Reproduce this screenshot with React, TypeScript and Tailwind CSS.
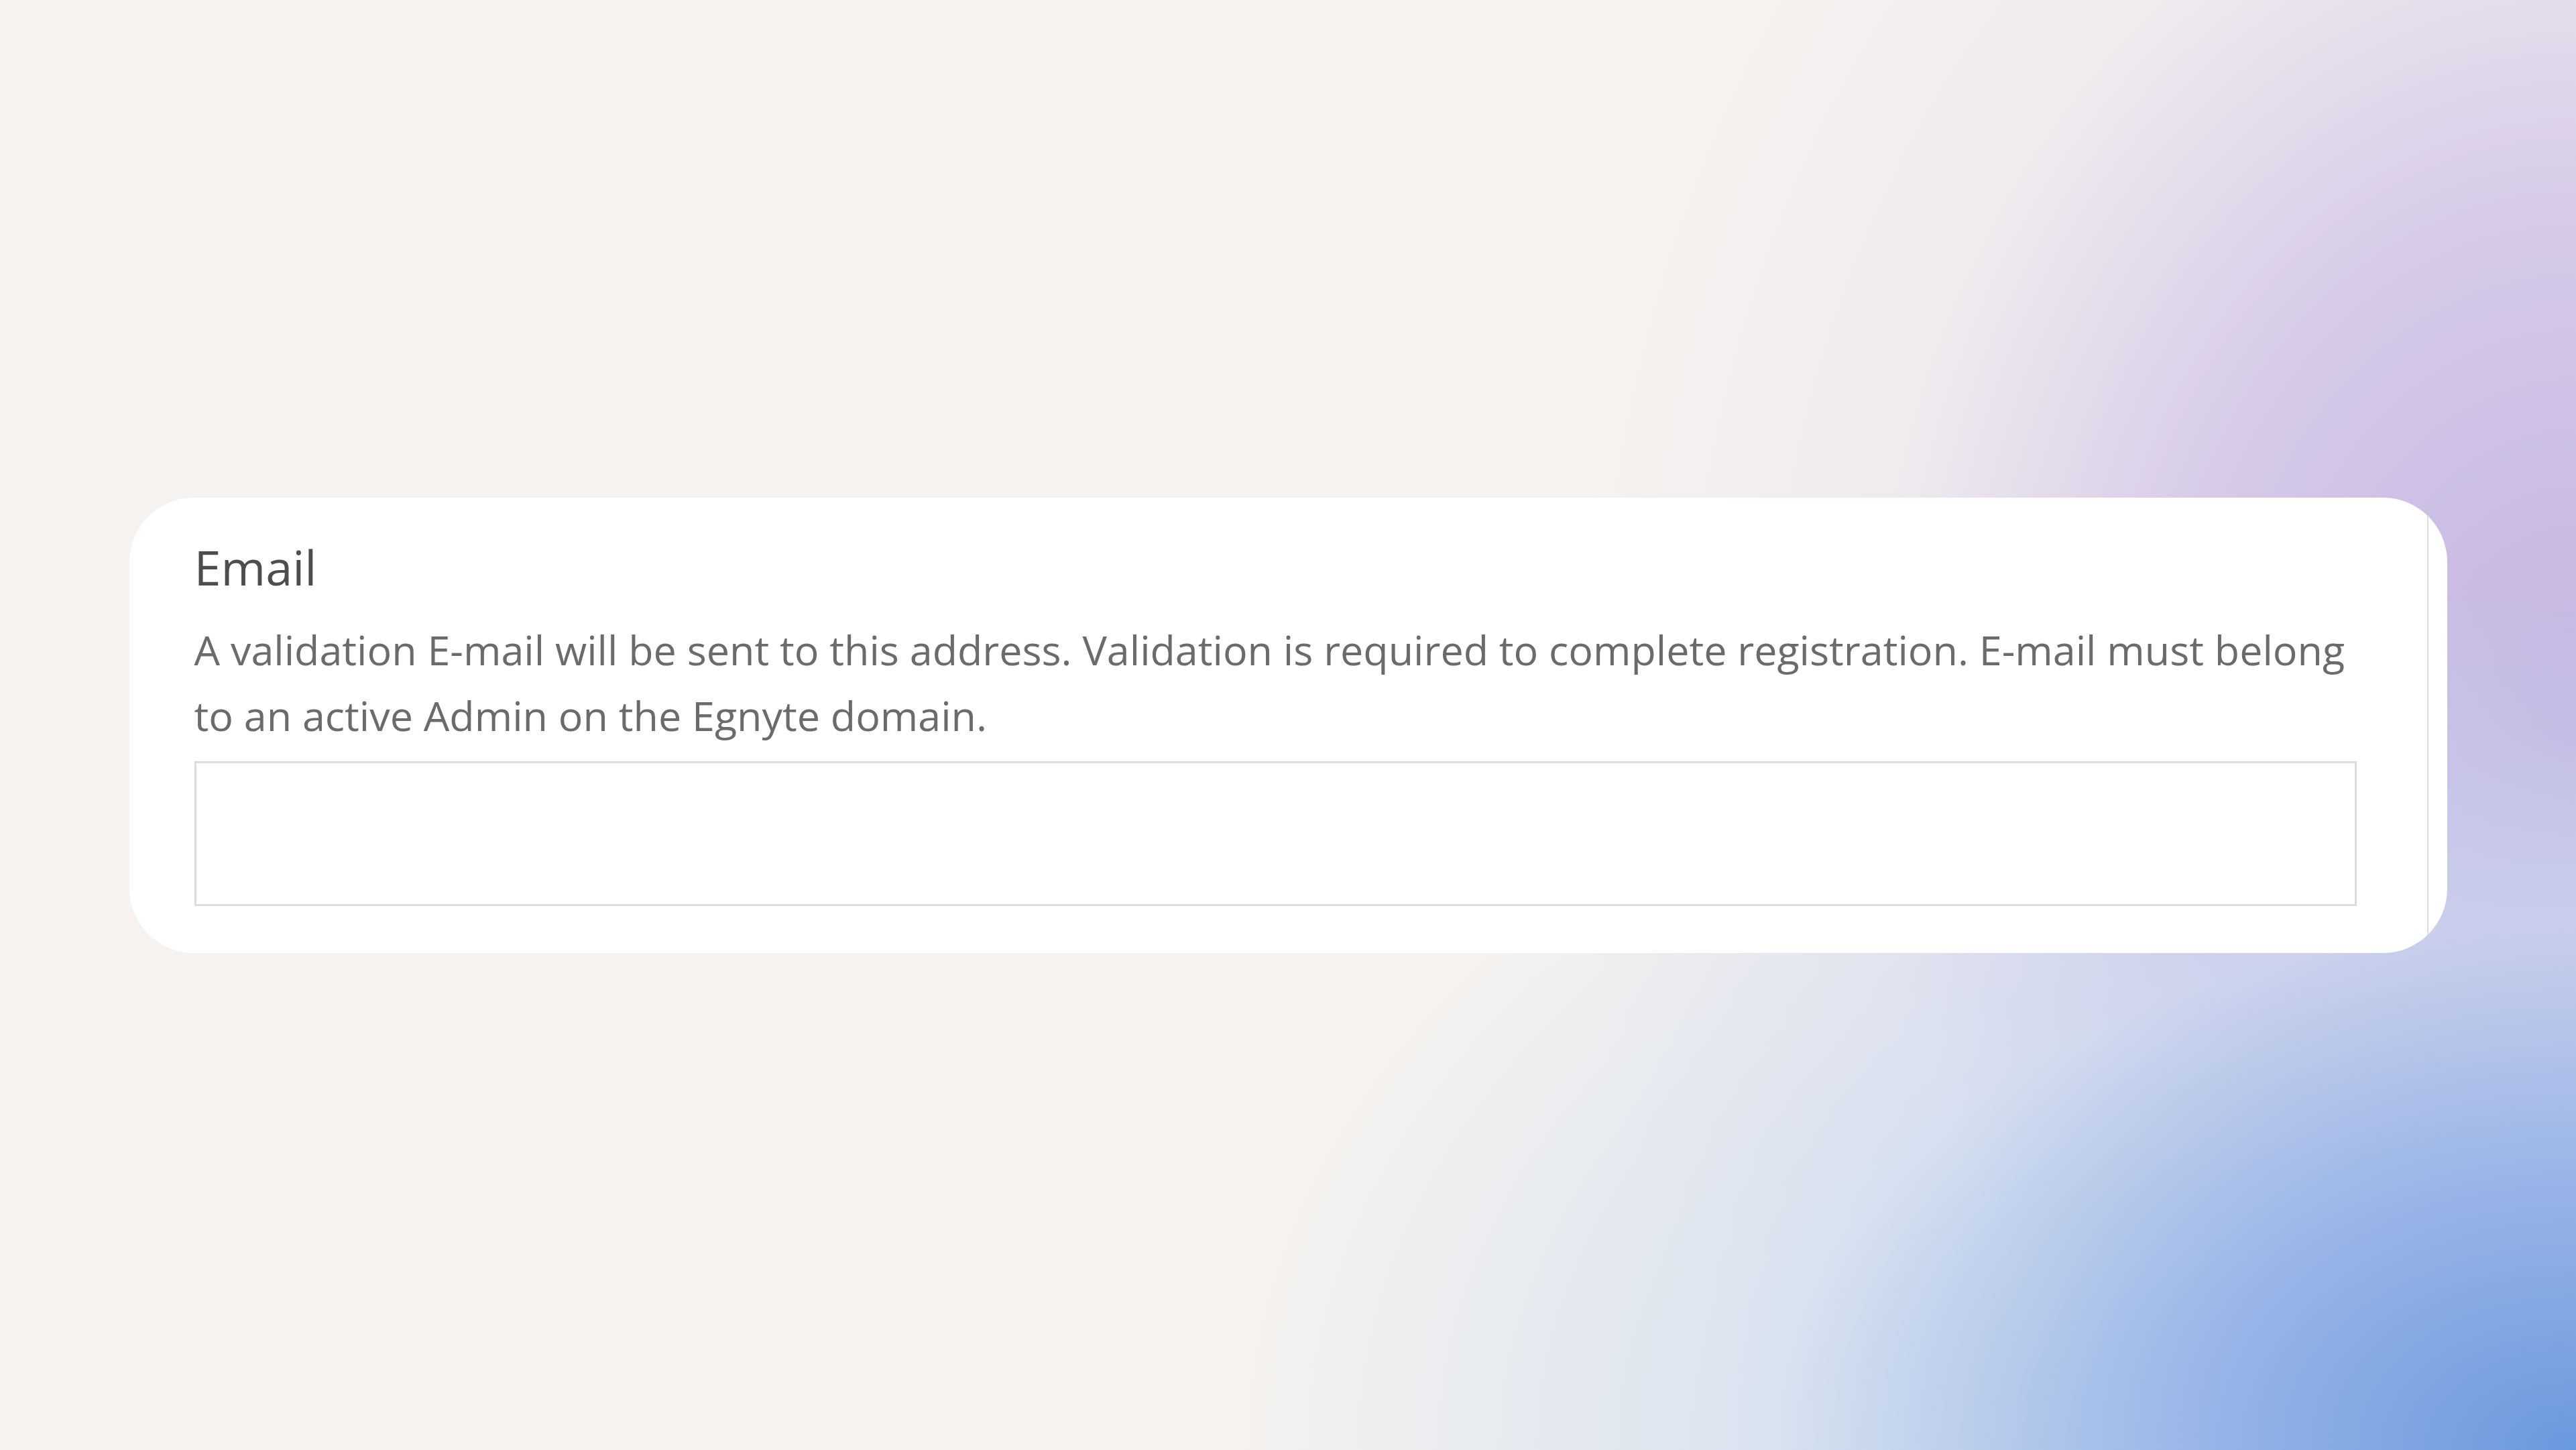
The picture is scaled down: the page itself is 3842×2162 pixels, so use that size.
import React from "react";

export default function App() {
  return (
    <div className="w-[3842px] h-[2162px] flex items-center justify-center [background:radial-gradient(ellipse_2000px_1300px_at_100%_100%,#6a98de_0%,rgba(140,175,230,0.85)_30%,rgba(198,217,240,0.6)_60%,rgba(245,242,239,0)_100%),radial-gradient(ellipse_1500px_1900px_at_100%_50%,#c2b3e2_0%,rgba(200,185,228,0.7)_40%,rgba(230,220,238,0.35)_70%,rgba(245,242,239,0)_100%),#f5f2ef]">
      <div className="w-[3457px] h-[679px] rounded-[96px] bg-white overflow-hidden flex">
        <div className="w-[3429px] border-r-2 border-[#dcdcdc] pl-[97px] pr-[105px] pt-[65px] pb-[70px] flex flex-col [font-family:'Open_Sans',sans-serif]">
          <div className="text-[72px] leading-[76px] text-[#4d4d4d]">Email</div>
          <p className="mt-[37px] text-[61px] leading-[98px] text-[#6b6b6b]">
            A validation E-mail will be sent to this address. Validation is required to complete registration. E-mail must belong to an active Admin on the Egnyte domain.
          </p>
          <input
            type="text"
            className="mt-[19px] h-[216px] w-full border-[3px] border-[#dcdcdc] bg-white outline-none"
          />
        </div>
      </div>
    </div>
  );
}
